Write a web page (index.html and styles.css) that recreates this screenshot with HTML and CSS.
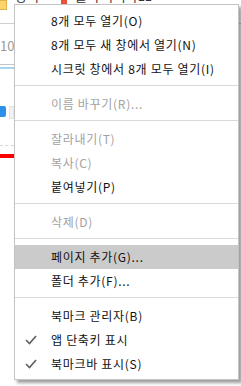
FILE: index.html
```html
<!doctype html>
<html>
	<head>
		<meta charset="utf-8">
		<title>북마크 메뉴</title>
		<link rel="stylesheet" href="styles.css">
	</head>
	<body>
		<div class="page">
			<div class="bookmarks">
				<span class="folder"></span>
				<span class="bm">장여</span>
				<span class="bm-icon"></span>
				<span class="bm">폴더 바리바11</span>
			</div>
			<div class="side">
				<div class="search">10어<span class="caret"></span></div>
				<div class="rule"></div>
				<div class="rule blue"></div>
				<div class="buttons"><span class="btn"></span><span class="box"></span></div>
				<div class="dots"></div>
				<div class="redbar"></div>
			</div>
		</div>

		<div class="menu">
			<div class="item">8개 모두 열기(O)</div>
			<div class="item">8개 모두 새 창에서 열기(N)</div>
			<div class="item">시크릿 창에서 8개 모두 열기(I)</div>
			<div class="sep"></div>
			<div class="item off">이름 바꾸기(R)...</div>
			<div class="sep"></div>
			<div class="item off">잘라내기(T)</div>
			<div class="item off">복사(C)</div>
			<div class="item">붙여넣기(P)</div>
			<div class="sep"></div>
			<div class="item off">삭제(D)</div>
			<div class="sep"></div>
			<div class="item hover">페이지 추가(G)...</div>
			<div class="item">폴더 추가(F)...</div>
			<div class="sep"></div>
			<div class="item">북마크 관리자(B)</div>
			<div class="item"><svg class="check" width="12" height="10" viewBox="0 0 12 10"><polyline points="1,5 4.5,8.5 11,1" fill="none" stroke="#5f5f5f" stroke-width="1.6"/></svg>앱 단축키 표시</div>
			<div class="item"><svg class="check" width="12" height="10" viewBox="0 0 12 10"><polyline points="1,5 4.5,8.5 11,1" fill="none" stroke="#5f5f5f" stroke-width="1.6"/></svg>북마크바 표시(S)</div>
		</div>
	</body>
</html>
```

FILE: styles.css
```css
html, body {
    margin: 0;
    padding: 0;
    background: #fff;
    font-family: "Noto Sans CJK KR", sans-serif;
    font-size: 12px;
}
body {
    width: 241px;
    height: 386px;
    overflow: hidden;
    position: relative;
}

/* page behind the menu */
.bookmarks {
    height: 23px;
    border-bottom: 1px solid #d0d0d0;
    display: flex;
    align-items: flex-start;
    gap: 8px;
    overflow: hidden;
}
.folder {
    width: 7px;
    height: 10px;
    background: #fbd46e;
    border: 1px solid #e2b24a;
    border-left: 0;
    box-sizing: border-box;
    flex: none;
}
.bm {
    margin-top: -12px;
    color: #333;
    font-size: 13px;
    line-height: 16px;
}
.bm-icon {
    width: 6px;
    height: 4px;
    background: #e8503a;
    margin-left: 14px;
}
.side {
    width: 14px;
    overflow: hidden;
}
.search {
    margin-top: 10px;
    height: 24px;
    line-height: 24px;
    color: #9a9a9a;
    font-size: 13px;
    white-space: nowrap;
    position: relative;
}
.caret {
    display: inline-block;
    width: 1px;
    height: 14px;
    background: #f08a24;
    vertical-align: middle;
}
.rule {
    margin-top: 6px;
    height: 1px;
    background: #c4c4c4;
}
.rule.blue {
    margin-top: 2px;
    height: 2px;
    background: #a6d4f2;
}
.buttons {
    margin-top: 37px;
    display: flex;
    gap: 3px;
}
.btn {
    width: 7px;
    height: 11px;
    background: #2b90e8;
    border-radius: 0 2px 2px 0;
}
.box {
    width: 4px;
    height: 11px;
    background: #f2f2f2;
    border: 1px solid #e4e4e4;
}
.dots {
    margin-top: 26px;
    border-top: 1px dashed #d6d6d6;
}
.redbar {
    margin-top: 8px;
    height: 4px;
    background: #ff0000;
}

/* context menu */
.menu {
    position: absolute;
    left: 14px;
    top: 4px;
    width: 225px;
    box-sizing: border-box;
    background: #fff;
    border: 1px solid #c4c4c4;
    padding: 4px 0 3px;
    box-shadow: 3px 3px 3px rgba(0, 0, 0, 0.38);
}
.item {
    height: 24px;
    line-height: 24px;
    padding-left: 36px;
    color: #111;
    letter-spacing: 0.7px;
    white-space: nowrap;
    position: relative;
}
.item.off {
    color: #a2a2a2;
}
.item.hover {
    background: #cbcbcb;
}
.check {
    position: absolute;
    left: 10px;
    top: 7px;
}
.sep {
    height: 1px;
    margin: 4px 0 6px;
    background: #d9d9d9;
}
```
